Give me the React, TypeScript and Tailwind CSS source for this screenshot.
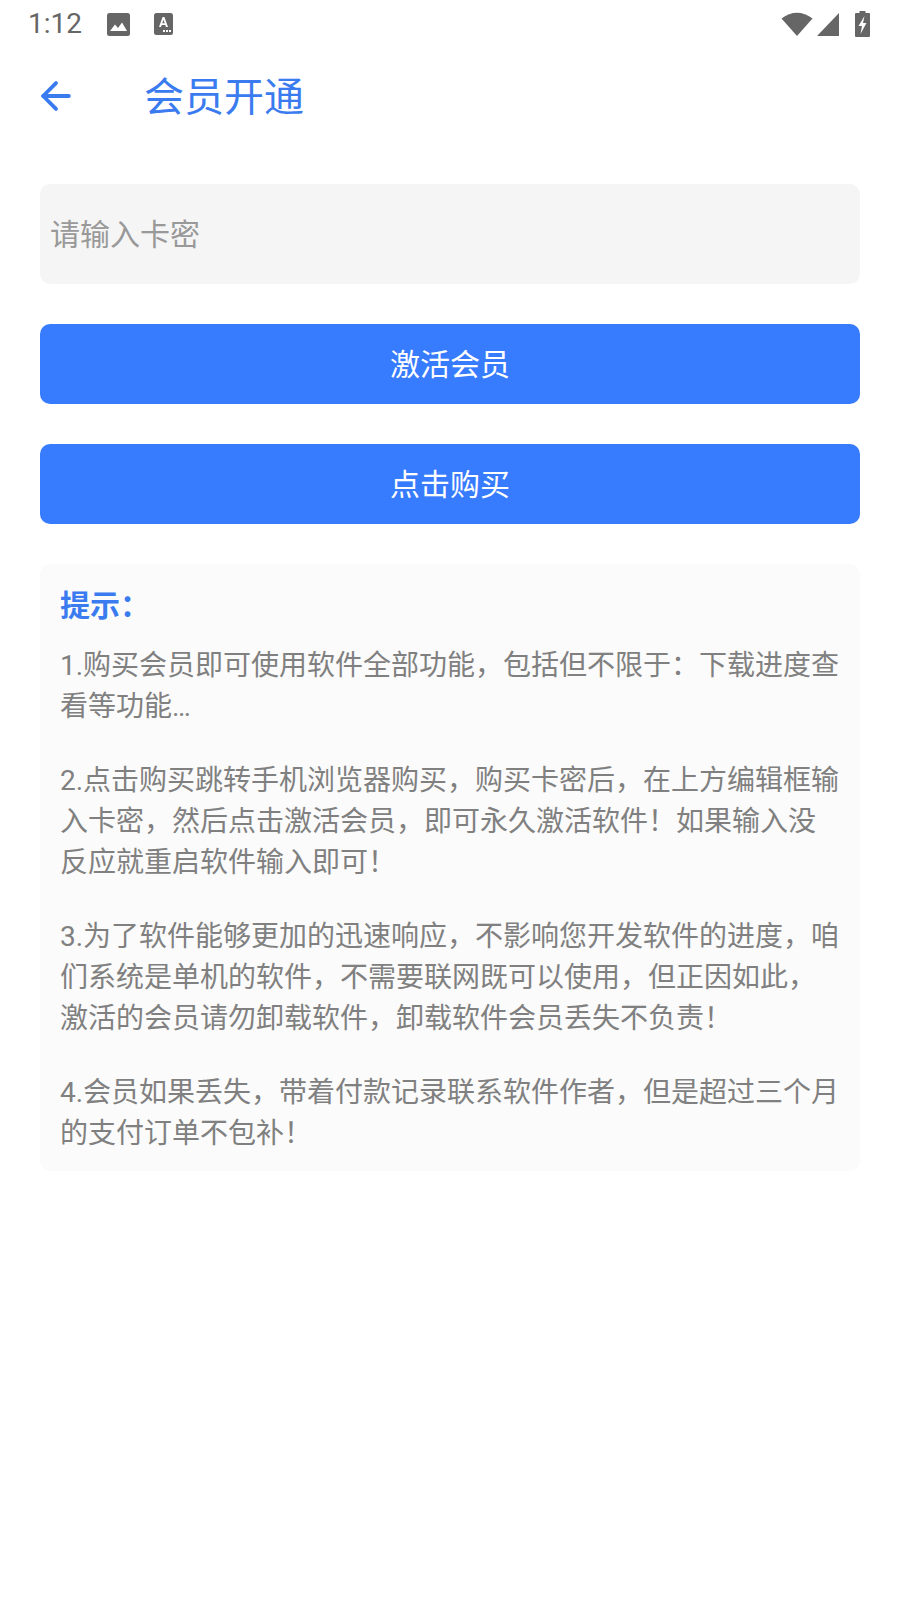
import { ArrowLeft } from 'lucide-react';

const tips = [
  '1.购买会员即可使用软件全部功能，包括但不限于：下载进度查看等功能…',
  '2.点击购买跳转手机浏览器购买，购买卡密后，在上方编辑框输入卡密，然后点击激活会员，即可永久激活软件！如果输入没反应就重启软件输入即可！',
  '3.为了软件能够更加的迅速响应，不影响您开发软件的进度，咱们系统是单机的软件，不需要联网既可以使用，但正因如此，激活的会员请勿卸载软件，卸载软件会员丢失不负责！',
  '4.会员如果丢失，带着付款记录联系软件作者，但是超过三个月的支付订单不包补！',
];

function StatusBar() {
  return (
    <div className="flex h-[48px] items-center justify-between pl-[28px] pr-[30px] text-[#666666]">
      <div className="flex items-center">
        <span className="text-[28px] leading-[48px]">1:12</span>
        <svg className="ml-[25px]" width="23" height="23" viewBox="0 0 23 23">
          <rect width="23" height="23" rx="2.5" fill="#666666" />
          <path d="M3 18 L8 11.5 L11 15 L15 9.5 L20 18 Z" fill="#ffffff" />
        </svg>
        <svg className="ml-[24px]" width="19" height="22" viewBox="0 0 19 22">
          <rect width="19" height="22" rx="2.5" fill="#666666" />
          <path d="M5 14 L8.6 4 H10.4 L14 14 H12 L11.3 12 H7.7 L7 14 Z M8.3 10.3 H10.7 L9.5 6.8 Z" fill="#ffffff" />
          <rect x="9" y="17" width="2" height="2" fill="#ffffff" />
          <rect x="12" y="17" width="2" height="2" fill="#ffffff" />
          <rect x="15" y="17" width="2" height="2" fill="#ffffff" />
        </svg>
      </div>
      <div className="flex items-center">
        <svg width="32" height="24" viewBox="0 0 32 24">
          <path d="M0.5 6.5 Q16 -5 31.5 6.5 L16 24 Z" fill="#666666" />
        </svg>
        <svg className="ml-[4px]" width="23" height="23" viewBox="0 0 23 23">
          <path d="M0 23 L22 0 V23 Z" fill="#666666" />
        </svg>
        <svg className="ml-[15px]" width="15" height="26" viewBox="0 0 15 26">
          <path d="M4.5 0 H10.5 V2 H14 Q15 2 15 3 V25 Q15 26 14 26 H1 Q0 26 0 25 V3 Q0 2 1 2 H4.5 Z" fill="#666666" />
          <path d="M9.5 5 L3.5 15 H7 L5.5 23 L11.5 12 H8 Z" fill="#ffffff" />
        </svg>
      </div>
    </div>
  );
}

export default function App() {
  return (
    <div className="min-h-[1600px] bg-white font-['Roboto','Noto_Sans_CJK_SC',sans-serif]">
      <StatusBar />

      <div className="flex h-[96px] items-center pl-[34px] text-[#3a7bf0]">
        <ArrowLeft className="h-[44px] w-[44px]" strokeWidth={2.1} />
        <span className="ml-[66px] pt-[4px] text-[40px] leading-[56px]">会员开通</span>
      </div>

      <div className="mt-[40px] flex flex-col gap-[40px] px-[40px]">
        <div className="flex h-[100px] items-center rounded-[10px] bg-[#f5f5f5] pl-[10px] text-[30px] text-[#999999]">
          请输入卡密
        </div>
        <button className="h-[80px] rounded-[10px] bg-[#377bff] text-[30px] text-white">激活会员</button>
        <button className="h-[80px] rounded-[10px] bg-[#377bff] text-[30px] text-white">点击购买</button>

        <div className="rounded-[10px] bg-[#fbfbfb] px-[20px] pb-[17px] pt-[22px]">
          <div className="text-[30px] font-bold leading-[40px] text-[#3a7bf0]">提示：</div>
          <div className="mt-[19px] flex flex-col gap-[33px] text-[28px] leading-[41px] text-[#808080]">
            {tips.map(t => (
              <p key={t}>{t}</p>
            ))}
          </div>
        </div>
      </div>
    </div>
  );
}
